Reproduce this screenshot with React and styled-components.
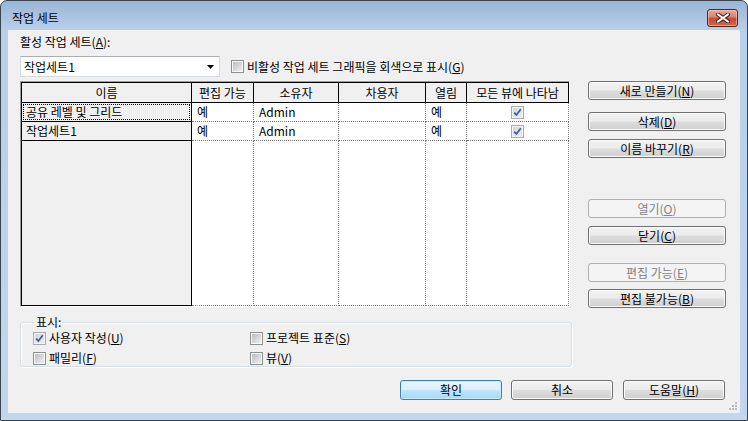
import React from "react";
import styled, { createGlobalStyle } from "styled-components";

const GlobalStyle = createGlobalStyle`
  html, body {
    margin: 0;
    padding: 0;
    background: #ffffff;
  }
  body {
    font-family: "Noto Sans CJK KR", "Noto Sans", sans-serif;
    font-size: 12px;
    color: #000;
  }
  * {
    box-sizing: border-box;
  }
`;

const Window = styled.div`
  width: 748px;
  height: 421px;
  border: 1px solid #3b4350;
  border-radius: 7px 7px 0 0;
  background: linear-gradient(to bottom, #9ab5d4 0px, #b8cfe9 29px, #c1d7ee 100%);
  display: flex;
  flex-direction: column;
  overflow: hidden;
`;

const TitleBar = styled.div`
  height: 29px;
  flex: none;
  display: flex;
  align-items: center;
  justify-content: space-between;
  padding: 5px 9px 0 11px;
`;

const Title = styled.span`
  line-height: 14px;
`;

const CloseButton = styled.div`
  width: 31px;
  height: 18px;
  border: 1px solid #5b2219;
  border-radius: 3px;
  background: linear-gradient(to bottom, #e9ab9c 0%, #d88572 42%, #c14a31 55%, #cf6a4c 100%);
  box-shadow: inset 0 0 0 1px rgba(255, 220, 210, 0.5);
  display: flex;
  align-items: center;
  justify-content: center;
`;

const Client = styled.div`
  position: relative;
  flex: 1;
  margin: 0 7px 7px 7px;
  background: #f0f0f0;
  padding: 5px 14px 0 12px;
  display: flex;
  flex-direction: column;
`;

const Label = styled.div`
  line-height: 14px;
`;

const ComboRow = styled.div`
  display: flex;
  align-items: center;
  margin-top: 7px;
`;

const Combo = styled.div`
  width: 200px;
  height: 21px;
  background: #fff;
  border: 1px solid #d5dae1;
  border-top-color: #abadb3;
  display: flex;
  align-items: center;
  justify-content: space-between;
  padding: 0 5px 0 3px;
  line-height: 14px;
`;

const CheckLabel = styled.label`
  display: flex;
  align-items: center;
  gap: 3px;
  line-height: 14px;
  margin-left: ${p => p.$offset || 0}px;
  height: 16px;
`;

const Box = styled.span`
  width: 13px;
  height: 13px;
  flex: none;
  border: 1px solid ${p => (p.$muted ? "#a9acb0" : "#8e8f8f")};
  padding: 1px;
  background: ${p =>
    p.$muted
      ? "linear-gradient(135deg, #d4d6d9, #ececec) content-box, #f4f4f4"
      : "linear-gradient(135deg, #b8bcc2, #efefef) content-box, #f6f6f6"};
  display: flex;
  align-items: center;
  justify-content: center;
`;

const MainRow = styled.div`
  display: flex;
  align-items: flex-start;
  gap: 18px;
  margin-top: 4px;
`;

const Table = styled.div`
  width: 550px;
  height: 226px;
  border: 1px solid;
  border-color: #a0a0a0 #ffffff #ffffff #a0a0a0;
  display: grid;
  grid-template-columns: 171px 62px 85px 87px 41px 102px;
  grid-template-rows: 21px 19px 19px 1fr;
`;

const HeadCell = styled.div`
  background: #f0f0f0;
  border-top: 1px solid #000;
  border-bottom: 1px solid #000;
  border-right: 1px solid #000;
  border-left: ${p => (p.$first ? "1px solid #000" : "none")};
  display: flex;
  align-items: center;
  justify-content: center;
  white-space: nowrap;
  line-height: 14px;
`;

const NameCell = styled.div`
  background: #f0f0f0;
  border-left: 1px solid #000;
  border-right: 1px solid #000;
  border-bottom: 1px solid #000;
  display: flex;
  align-items: center;
  line-height: 14px;
  padding: 1px;
`;

const NameText = styled.div`
  flex: 1;
  align-self: stretch;
  display: flex;
  align-items: center;
  padding-left: 3px;
  outline: ${p => (p.$focus ? "1px dotted #000" : "none")};
  outline-offset: -1px;
`;

const DataCell = styled.div`
  background: #fff;
  border-right: 1px dotted #7a7a7a;
  border-bottom: 1px dotted #7a7a7a;
  display: flex;
  align-items: center;
  justify-content: ${p => (p.$center ? "center" : "flex-start")};
  padding-left: ${p => (p.$center ? 0 : 5)}px;
  line-height: 14px;
`;

const ButtonColumn = styled.div`
  width: 138px;
  display: flex;
  flex-direction: column;
`;

const Button = styled.button`
  width: ${p => p.$width || "100%"};
  height: ${p => p.$height || 19}px;
  margin-top: ${p => p.$gap || 0}px;
  margin-left: ${p => p.$left || 0}px;
  padding: 0;
  border: 1px solid #707070;
  border-radius: 3px;
  background: linear-gradient(to bottom, #f2f2f2 0%, #ebebeb 48%, #dddddd 52%, #cfcfcf 100%);
  box-shadow: inset 0 0 0 1px #fbfbfb;
  font: inherit;
  line-height: 14px;
  color: #000;
  &:disabled {
    border-color: #adb2b5;
    background: #f4f4f4;
    box-shadow: none;
    color: #838383;
  }
`;

const DefaultButton = styled(Button)`
  border-color: #3c7fb1;
  background: linear-gradient(to bottom, #eaf6fd 0%, #d9f0fc 48%, #bee6fd 52%, #a7d9f5 100%);
  box-shadow: inset 0 0 0 1px #c4ecfd;
`;

const GroupBox = styled.fieldset`
  width: 552px;
  margin: 7px 0 0 0;
  padding: 1px 0 0 12px;
  border: 1px solid #d5dfe5;
  border-radius: 3px;
  box-shadow: inset 1px 1px 0 #fff, 1px 1px 0 #fff;
  display: grid;
  grid-template-columns: 217px 1fr;
  grid-template-rows: 20px 16px;
`;

const Legend = styled.legend`
  padding: 0 1px;
  margin-left: 2px;
  line-height: 14px;
`;

const Footer = styled.div`
  display: flex;
  justify-content: flex-end;
  gap: 9px;
  margin-top: 13px;
  padding-right: 1px;
`;

const Grip = styled.svg`
  position: absolute;
  right: 2px;
  bottom: 2px;
`;

const CheckMark = ({ muted }) => (
  <svg width="9" height="9" viewBox="0 0 9 9">
    <path
      d="M1.2 4.6 L3.4 7 L7.8 1.2"
      fill="none"
      stroke={muted ? "#3b5aa0" : "#2c4c98"}
      strokeWidth="1.7"
    />
  </svg>
);

const CheckBox = ({ checked, muted }) => (
  <Box $muted={muted}>{checked && <CheckMark muted={muted} />}</Box>
);

const columns = ["이름", "편집 가능", "소유자", "차용자", "열림", "모든 뷰에 나타남"];

const rows = [
  { name: "공유 레벨 및 그리드", editable: "예", owner: "Admin", borrower: "", open: "예", visible: true, focus: true },
  { name: "작업세트1", editable: "예", owner: "Admin", borrower: "", open: "예", visible: true },
];

const sideButtons = [
  { label: "새로 만들기", key: "N", gap: 0 },
  { label: "삭제", key: "D", gap: 12 },
  { label: "이름 바꾸기", key: "R", gap: 8 },
  { label: "열기", key: "O", gap: 41, disabled: true },
  { label: "닫기", key: "C", gap: 8 },
  { label: "편집 가능", key: "E", gap: 18, disabled: true },
  { label: "편집 불가능", key: "B", gap: 7 },
];

const Mnemonic = ({ label, k }) => (
  <>
    {label}(<u>{k}</u>)
  </>
);

export default function App() {
  return (
    <>
      <GlobalStyle />
      <Window>
        <TitleBar>
          <Title>작업 세트</Title>
          <CloseButton>
            <svg width="14" height="10" viewBox="0 0 14 10">
              <path d="M2 1.5 L12 8.5 M12 1.5 L2 8.5" stroke="#4a1a12" strokeWidth="4" strokeLinecap="square" />
              <path d="M2 1.5 L12 8.5 M12 1.5 L2 8.5" stroke="#ffffff" strokeWidth="2" strokeLinecap="square" />
            </svg>
          </CloseButton>
        </TitleBar>
        <Client>
          <Label>
            활성 작업 세트(<u>A</u>):
          </Label>
          <ComboRow>
            <Combo>
              <span>작업세트1</span>
              <svg width="7" height="4" viewBox="0 0 7 4">
                <path d="M0 0 H7 L3.5 4 Z" fill="#000" />
              </svg>
            </Combo>
            <CheckLabel $offset={11}>
              <CheckBox />
              <span>
                비활성 작업 세트 그래픽을 회색으로 표시(<u>G</u>)
              </span>
            </CheckLabel>
          </ComboRow>
          <MainRow>
            <Table>
              {columns.map((c, i) => (
                <HeadCell key={c} $first={i === 0}>
                  {c}
                </HeadCell>
              ))}
              {rows.map(r => (
                <React.Fragment key={r.name}>
                  <NameCell>
                    <NameText $focus={r.focus}>{r.name}</NameText>
                  </NameCell>
                  <DataCell>{r.editable}</DataCell>
                  <DataCell>{r.owner}</DataCell>
                  <DataCell>{r.borrower}</DataCell>
                  <DataCell>{r.open}</DataCell>
                  <DataCell $center>
                    <CheckBox checked={r.visible} muted />
                  </DataCell>
                </React.Fragment>
              ))}
              <NameCell />
              <DataCell />
              <DataCell />
              <DataCell />
              <DataCell />
              <DataCell />
            </Table>
            <ButtonColumn>
              {sideButtons.map(b => (
                <Button key={b.key} $gap={b.gap} disabled={b.disabled}>
                  <Mnemonic label={b.label} k={b.key} />
                </Button>
              ))}
            </ButtonColumn>
          </MainRow>
          <GroupBox>
            <Legend>표시:</Legend>
            <CheckLabel>
              <CheckBox checked muted />
              <span>
                사용자 작성(<u>U</u>)
              </span>
            </CheckLabel>
            <CheckLabel>
              <CheckBox />
              <span>
                프로젝트 표준(<u>S</u>)
              </span>
            </CheckLabel>
            <CheckLabel>
              <CheckBox />
              <span>
                패밀리(<u>F</u>)
              </span>
            </CheckLabel>
            <CheckLabel>
              <CheckBox />
              <span>
                뷰(<u>V</u>)
              </span>
            </CheckLabel>
          </GroupBox>
          <Footer>
            <DefaultButton $width="102px" $height={20}>
              확인
            </DefaultButton>
            <Button $width="102px" $height={20}>
              취소
            </Button>
            <Button $width="102px" $height={20} $left={1}>
              <Mnemonic label="도움말" k="H" />
            </Button>
          </Footer>
          <Grip width="10" height="10" viewBox="0 0 10 10">
            <rect x="7" y="1" width="2" height="2" fill="#b8bcc2" />
            <rect x="4" y="4" width="2" height="2" fill="#b8bcc2" />
            <rect x="7" y="4" width="2" height="2" fill="#b8bcc2" />
            <rect x="1" y="7" width="2" height="2" fill="#b8bcc2" />
            <rect x="4" y="7" width="2" height="2" fill="#b8bcc2" />
            <rect x="7" y="7" width="2" height="2" fill="#b8bcc2" />
          </Grip>
        </Client>
      </Window>
    </>
  );
}
